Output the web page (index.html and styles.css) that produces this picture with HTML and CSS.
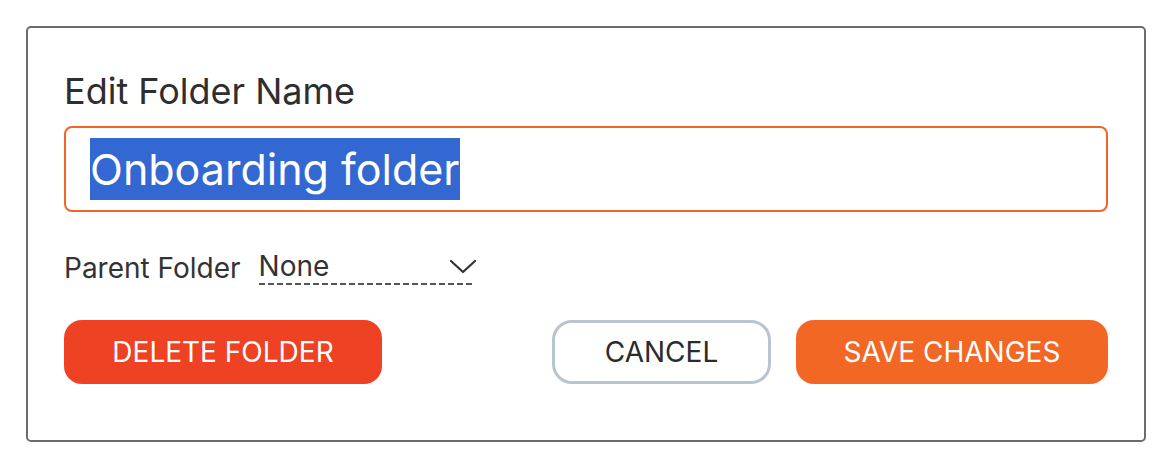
FILE: index.html
```html
<!doctype html>
<html>
    <head>
        <meta charset="utf-8">
        <title>Edit Folder</title>
        <link rel="stylesheet" href="styles.css">
    </head>
    <body>
        <div class="card">
            <h2 class="title">Edit Folder Name</h2>
            <div class="name-input">
                <span class="selected">Onboarding folder</span>
            </div>

            <div class="parent-row">
                <span class="parent-label">Parent Folder</span>
                <div class="parent-select">
                    <span>None</span>
                    <svg class="chevron" width="28" height="15" viewBox="0 0 28 15">
                        <path d="M2 2 L14 13 L26 2" fill="none" stroke="#333" stroke-width="2.2" stroke-linecap="round" stroke-linejoin="round"/>
                    </svg>
                </div>
            </div>

            <div class="actions">
                <button class="btn delete">DELETE FOLDER</button>
                <div class="right">
                    <button class="btn cancel">CANCEL</button>
                    <button class="btn save">SAVE CHANGES</button>
                </div>
            </div>
        </div>
    </body>
</html>
```

FILE: styles.css
```css
* {
    margin: 0;
    padding: 0;
    box-sizing: border-box;
}

body {
    background-color: #ffffff;
    font-family: Inter, "Noto Sans", sans-serif;
    color: #333333;
}

.card {
    margin: 26px 0 0 26px;
    width: 1120px;
    height: 416px;
    border: 2px solid #6b6b6b;
    border-radius: 5px;
    padding: 41px 36px 0 36px;
    display: flex;
    flex-direction: column;
}

.title {
    font-size: 36px;
    line-height: 44px;
    font-weight: 400;
    color: #2e2e2e;
}

.name-input {
    margin-top: 13px;
    height: 86px;
    border: 2px solid #f26522;
    border-radius: 8px;
    padding: 0 24px;
    display: flex;
    align-items: center;
}

.selected {
    font-size: 43px;
    line-height: 62px;
    background-color: #3367d1;
    color: #ffffff;
}

.parent-row {
    margin-top: 37px;
    display: flex;
    align-items: flex-end;
}

.parent-label {
    font-size: 28px;
    line-height: 34px;
    color: #333333;
}

.parent-select {
    margin-left: 18px;
    width: 216px;
    height: 36px;
    padding-bottom: 2px;
    display: flex;
    justify-content: space-between;
    align-items: center;
    font-size: 28px;
    line-height: 34px;
    background-image: repeating-linear-gradient(to right, #555555 0 6px, transparent 6px 9px);
    background-size: 100% 2px;
    background-position: bottom left;
    background-repeat: no-repeat;
}

.chevron {
    margin-right: -2px;
}

.actions {
    margin-top: 35px;
    display: flex;
    justify-content: space-between;
}

.right {
    display: flex;
    gap: 25px;
}

.btn {
    height: 64px;
    border-radius: 18px;
    border: none;
    font-family: Inter, "Noto Sans", sans-serif;
    font-size: 28px;
    cursor: pointer;
}

.delete {
    width: 318px;
    background-color: #ef4123;
    color: #ffffff;
}

.cancel {
    width: 219px;
    background-color: #ffffff;
    border: 3px solid #b9c4d0;
    border-radius: 20px;
    color: #2b2b2b;
}

.save {
    width: 312px;
    background-color: #f26724;
    color: #ffffff;
}
```
